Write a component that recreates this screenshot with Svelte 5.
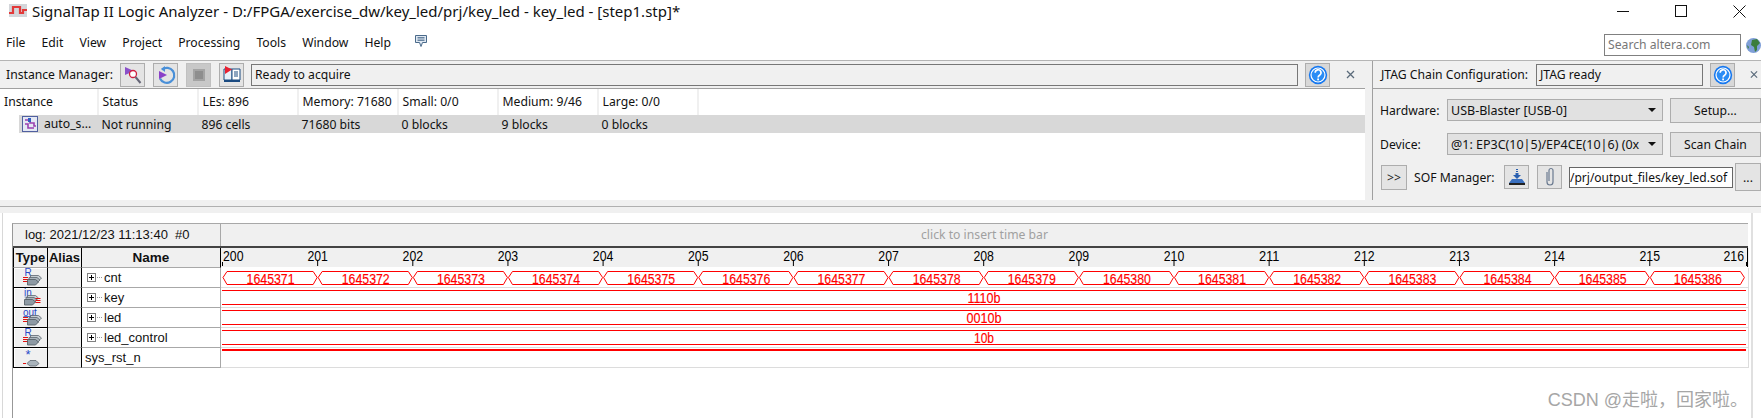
<script>
  const menus = ['File', 'Edit', 'View', 'Project', 'Processing', 'Tools', 'Window', 'Help'];
  const cols = [
    ['Instance', ''],
    ['Status', 'Not running'],
    ['LEs: 896', '896 cells'],
    ['Memory: 71680', '71680 bits'],
    ['Small: 0/0', '0 blocks'],
    ['Medium: 9/46', '9 blocks'],
    ['Large: 0/0', '0 blocks']
  ];
  const step = 95.15;
  const x0 = 1.5;
  const ticks = Array.from({ length: 17 }, (_, i) => ({ label: String(200 + i), x: x0 + step * i }));
  const segs = Array.from({ length: 16 }, (_, i) => {
    const a = x0 + step * i + 0.5;
    const b = x0 + step * (i + 1) - 0.5;
    return {
      label: String(1645371 + i),
      mid: (a + b) / 2 + 0.5,
      d: `M${a} 29.5L${a + 4} 23.5H${b - 4}L${b} 29.5L${b - 4} 36.5H${a + 4}Z`
    };
  });
  const buses = [
    { top: 42.5, label: '1110b', len: 33 },
    { top: 62.5, label: '0010b', len: 35 },
    { top: 82.5, label: '10b', len: 20 }
  ];
  const signals = [
    { kind: 'R', name: 'cnt', bus: true },
    { kind: 'in', name: 'key', bus: true },
    { kind: 'out', name: 'led', bus: true },
    { kind: 'R', name: 'led_control', bus: true },
    { kind: '*', name: 'sys_rst_n', bus: false }
  ];
</script>

{#snippet help()}
  <div class="btn help">
    <svg width="20" height="20" viewBox="0 0 20 20">
      <circle cx="10" cy="10" r="9.2" fill="#1678f0" />
      <circle cx="10" cy="10" r="7" fill="#2a8cf5" stroke="#fff" stroke-width="1.2" />
      <path d="M7.2 7.8a2.9 2.9 0 1 1 4.4 2.4c-1 .6-1.5 1-1.5 2.2" fill="none" stroke="#fff" stroke-width="1.6" />
      <rect x="9.2" y="13.5" width="1.8" height="1.8" fill="#fff" />
    </svg>
  </div>
{/snippet}

{#snippet closeX()}
  <svg class="x" width="9" height="9" viewBox="0 0 9 9"><path d="M1 1l7 7M8 1L1 8" stroke="#5a6a7a" stroke-width="1.3" /></svg>
{/snippet}

{#snippet stack(dx, dy)}
  <g transform="translate({dx} {dy})">
    <path d="M3 4h8l3 2.500-3 3H3z" fill="#c4ccd2" stroke="#5c666e" stroke-width=".8" />
    <path d="M1.500 6h8l3 2.500-3 3h-8z" fill="#aab4bc" stroke="#5c666e" stroke-width=".8" />
    <path d="M0 8h8l3 2.500-3 3H0z" fill="#8e9aa4" stroke="#4e5860" stroke-width=".8" />
  </g>
{/snippet}

{#snippet typeIcon(kind)}
  <svg width="26" height="19" viewBox="0 0 26 19">
    {#if kind === '*'}
      <text x="7.500" y="11" class="tk big">*</text>
      <path d="M5 15.500h3" stroke="#e01010" />
      <path d="M9 15.500l3-3h6l3 3-3 2.500h-6z" fill="#aab4bc" stroke="#5c666e" stroke-width=".8" />
    {:else if kind === 'in'}
      <text x="6" y="8" class="tk">in</text>
      <path d="M6.500 9h9" stroke="#8090c0" />
      {@render stack(6.500, 3.500)}
      <path d="M17.500 10.500h5M17.500 12.500h5M17.500 14.500h5" stroke="#e01010" />
    {:else}
      <text x={kind === 'out' ? 5 : 6.500} y="8" class="tk">{kind === 'out' ? 'out' : 'R'}</text>
      {#if kind === 'out'}<path d="M5.500 8.500h14" stroke="#5070c8" />{/if}
      <path d="M5 9.500h5M5 11.500h5M5 13.500h5" stroke="#e01010" />
      {@render stack(9.500, 3.500)}
    {/if}
  </svg>
{/snippet}

<div class="page">
  <header class="title">
    <svg class="logo" width="18" height="13" viewBox="0 0 18 13">
      <rect width="18" height="13" fill="#d4d6da" />
      <path d="M0 9h4V3h7v6h3V6h4" fill="none" stroke="#e23a3a" stroke-width="2.200" />
    </svg>
    <span class="title-text">SignalTap II Logic Analyzer - D:/FPGA/exercise_dw/key_led/prj/key_led - key_led - [step1.stp]*</span>
    <div class="win">
      <svg width="12" height="12" viewBox="0 0 12 12"><path d="M0 6.500h12" stroke="#111" /></svg>
      <svg width="12" height="12" viewBox="0 0 12 12"><rect x=".5" y=".5" width="11" height="11" fill="none" stroke="#111" /></svg>
      <svg width="13" height="13" viewBox="0 0 13 13"><path d="M.5.5l12 12M12.500.5l-12 12" stroke="#111" /></svg>
    </div>
  </header>

  <nav class="menu">
    {#each menus as m}<span>{m}</span>{/each}
    <svg class="bubble" width="14" height="14" viewBox="0 0 14 14">
      <path d="M1.500 1.500h11v7h-4l-1.500 4-1.500-4h-4z" fill="#dfe8f2" stroke="#4a6a8a" />
      <path d="M3.500 3.500h7M3.500 5h7M3.500 6.500h7" stroke="#4a6a8a" stroke-width=".8" />
    </svg>
    <div class="search-wrap">
      <div class="search">Search altera.com</div>
      <svg class="globe" width="15" height="15" viewBox="0 0 15 15">
        <circle cx="7.500" cy="7.500" r="7.500" fill="#7f9fd8" />
        <path d="M6 2l5-1 3 4-3 3v4l-2 2-1-5-3-2zM1 7l2 2-1 2z" fill="#3c7d3c" />
      </svg>
    </div>
  </nav>

  <section class="top">
    <div class="left">
      <div class="bar">
        <span class="bar-label im">Instance Manager:</span>
        <div class="tools">
          <div class="btn">
            <svg width="20" height="20" viewBox="0 0 20 20">
              <path d="M2 2l9 4-9 4z" fill="#8a50c8" />
              <circle cx="10" cy="9" r="3.500" fill="#fff" stroke="#d02040" stroke-width="1.300" />
              <path d="M12.500 12l5 6" stroke="#667" stroke-width="2" />
            </svg>
          </div>
          <div class="btn">
            <svg width="20" height="20" viewBox="0 0 20 20">
              <path d="M6 4.500a7.500 7.500 0 1 1-2 9" fill="none" stroke="#4a90d8" stroke-width="2.200" />
              <path d="M9 1v6l-4-3z" fill="#4a90d8" />
              <path d="M3 6l8 4-8 4z" fill="#8a40c8" />
            </svg>
          </div>
          <div class="btn off">
            <svg width="14" height="14" viewBox="0 0 14 14">
              <rect x="1" y="1" width="12" height="12" fill="#a4a4a4" />
              <rect x="3" y="3" width="8" height="8" fill="#8e8e8e" />
            </svg>
          </div>
          <div class="btn">
            <svg width="20" height="20" viewBox="0 0 20 20">
              <path d="M2 4h8v11H2z" fill="#e8f0f8" stroke="#1a4a80" />
              <path d="M10 4h8v11h-8z" fill="#fff" stroke="#1a4a80" />
              <path d="M12 7h4M12 9h4M12 11h4" stroke="#1a4a80" />
              <path d="M2 15h16v2H2z" fill="#1a4a80" />
              <path d="M3 1l7 3.500L3 9z" fill="#e82030" />
            </svg>
          </div>
        </div>
        <div class="status">Ready to acquire</div>
        {@render help()}
        {@render closeX()}
      </div>
      <div class="inst">
        {#each cols as c, i}
          <div class="col">
            <div class="th">{c[0]}</div>
            <div class="td" class:first={i === 0}>
              {#if i === 0}
                <svg class="chip" width="16" height="16" viewBox="0 0 16 16">
                  <rect x=".5" y=".5" width="15" height="15" fill="#e4e8f4" stroke="#5060a0" />
                  <path d="M3 4h5v3h4v3h2M3 8h3v4h6" fill="none" stroke="#9a3fb0" stroke-width="1.600" />
                  <path d="M6 2h3v4H6z" fill="#3060c0" />
                </svg>
                <span>auto_s...</span>
              {:else}{c[1]}{/if}
            </div>
          </div>
        {/each}
        <div class="col fill"><div class="th"></div><div class="td"></div></div>
      </div>
    </div>

    <div class="right">
      <div class="bar">
        <span class="bar-label jl">JTAG Chain Configuration:</span>
        <div class="status jtag">JTAG ready</div>
        {@render help()}
        {@render closeX()}
      </div>
      <div class="form">
        <div class="form-row">
          <span class="lab">Hardware:</span>
          <div class="select"><span>USB-Blaster [USB-0]</span><i></i></div>
          <div class="btn wide">Setup...</div>
        </div>
        <div class="form-row">
          <span class="lab">Device:</span>
          <div class="select"><span>@1: EP3C(10|5)/EP4CE(10|6) (0x</span><i></i></div>
          <div class="btn wide">Scan Chain</div>
        </div>
        <div class="form-row sof">
          <div class="btn more">&gt;&gt;</div>
          <span class="sof-lab">SOF Manager:</span>
          <div class="btn">
            <svg width="18" height="18" viewBox="0 0 18 18">
              <path d="M8 1h2v1H8zM8 3h2v1H8zM7.500 5h3v2H13l-4 4-4-4h2.500z" fill="#2a60b0" />
              <path d="M1 15l3-4h10l3 4z" fill="#3a70c0" /><path d="M1 15h16v2H1z" fill="#222" />
            </svg>
          </div>
          <div class="btn clip">
            <svg width="12" height="20" viewBox="0 0 12 20">
              <path d="M3 5v10a3 3 0 0 0 6 0V3.500a2 2 0 0 0-4 0V14" fill="none" stroke="#6a7a90" stroke-width="1.200" />
            </svg>
          </div>
          <div class="sof-input">/prj/output_files/key_led.sof</div>
          <div class="btn dots">...</div>
        </div>
      </div>
    </div>
  </section>

  <div class="split"></div>

  <section class="wavepanel">
    <div class="wavebox">
      <div class="loghead">
        <div class="logcell">log: 2021/12/23 11:13:40  #0</div>
        <div class="timebar">click to insert time bar</div>
      </div>
      <div class="grid">
        <div class="hd type">Type</div>
        <div class="hd alias">Alias</div>
        <div class="hd name">Name</div>
        <svg class="wave" width="1528" height="120" viewBox="0 0 1528 120">
          <rect x="0" y="0" width="1528" height="19" fill="#f0f0f0" />
          <path d="M1526.500 0v19" stroke="#000" />
          {#each [39.5, 59.5, 79.5, 99.5, 119.5] as y}
            <path d="M0 {y}H1528" stroke="#dcdcdc" />
          {/each}
          <path d="M1527.500 20v100" stroke="#dcdcdc" />
          {#each ticks as t, i}
            <path d="M{i === 16 ? 1525.5 : t.x} {i === 0 || i === 16 ? 14 : 12}V18" stroke="#000" />
            <text x={i === 0 ? 2 : i === 16 ? 1523 : t.x} y="13" text-anchor={i === 0 ? 'start' : i === 16 ? 'end' : 'middle'} textLength="20.5" lengthAdjust="spacingAndGlyphs" class="tick">{t.label}</text>
          {/each}
          {#each segs as s}
            <path d={s.d} fill="none" stroke="#f00" />
            <text x={s.mid} y="35.500" text-anchor="middle" textLength="48" lengthAdjust="spacingAndGlyphs" class="val">{s.label}</text>
          {/each}
          {#each buses as b}
            <path d="M1 {b.top}H1525M1 {b.top + 14}H1525" stroke="#f00" fill="none" />
            <text x="763" y={b.top + 12.5} text-anchor="middle" textLength={b.len} lengthAdjust="spacingAndGlyphs" class="val">{b.label}</text>
          {/each}
          <path d="M1 102H1525" stroke="#f00" stroke-width="2" />
        </svg>
        {#each signals as s}
          <div class="c-type">{@render typeIcon(s.kind)}</div>
          <div class="c-alias"></div>
          <div class="c-name" class:plain={!s.bus}>
            {#if s.bus}
              <span class="plus"></span><span class="dots-line"></span>
            {/if}
            <span>{s.name}</span>
          </div>
        {/each}
      </div>
    </div>
    <div class="mark">CSDN @走啦，回家啦。</div>
  </section>
</div>

<style>
  :global(body) { margin: 0; background: #fff; }
  .page {
    width: 1761px; height: 418px; overflow: hidden; background: #fff;
    display: flex; flex-direction: column; position: relative;
    font-family: "Noto Sans", sans-serif; font-size: 12.2px; color: #111;
  }
  .title { height: 30px; flex: none; display: flex; align-items: center; padding: 0 0 8px 9px; box-sizing: border-box; }
  .logo { margin-top: -1px; }
  .title-text { margin-left: 5px; font-size: 15px; color: #111; white-space: nowrap; }
  .win { margin-left: auto; display: flex; align-items: center; gap: 46px; padding-right: 15px; }
  .menu { height: 30px; flex: none; display: flex; align-items: center; padding: 0 0 6px 6px; gap: 16.1px; position: relative; box-sizing: border-box; }
  .bubble { margin: -3px 0 0 7px; }
  .search-wrap { margin-left: auto; display: flex; align-items: center; gap: 5px; padding-top: 6px; }
  .search { height: 20px; line-height: 20px; border: 1px solid #808080; padding-left: 3px; color: #777; width: 132px; }

  .top { height: 139px; flex: none; display: flex; border-top: 1px solid #b4b4b4; background: #f0f0f0; box-sizing: content-box; }
  .left { width: 1365px; flex: none; display: flex; flex-direction: column; background: #fff; }
  .right { width: 389px; margin-left: 7px; flex: none; border-left: 1px solid #a0a0a0; box-sizing: border-box; display: flex; flex-direction: column; }
  .bar { height: 28px; flex: none; background: #f0f0f0; border-bottom: 1px solid #a0a0a0; display: flex; align-items: center; box-sizing: border-box; padding-left: 6px; }
  .bar-label { white-space: nowrap; flex: none; }
  .im { width: 107px; }
  .jl { width: 149px; }
  .tools { display: flex; gap: 8px; margin-left: 7px; }
  .btn { width: 25px; height: 24px; box-sizing: border-box; border: 1px solid #adadad; background: #e4e4e4; display: flex; align-items: center; justify-content: center; flex: none; }
  .off { background: #c8c8c8; border-color: #c0c0c0; }
  .status { flex: 1; height: 22px; margin-left: 7px; border: 1px solid #777; box-sizing: border-box; line-height: 20px; padding-left: 3px; background: #f0f0f0; }
  .help { margin-left: 7px; background: #d8d8d8; }
  .x { margin-left: 16px; margin-right: 10px; }
  .right .x { margin-left: 15px; margin-right: 3px; }
  .right .bar { padding-left: 8px; }
  .jtag { flex: none; width: 167px; margin-left: 6px; }

  .inst { display: flex; flex: 1; }
  .col { width: 100px; flex: none; }
  .col:first-child { width: 98.5px; }
  .fill { flex: 1; }
  .th { height: 26px; line-height: 26px; padding-left: 4px; border-right: 2px solid #f0f0f0; box-sizing: border-box; white-space: nowrap; overflow: hidden; }
  .fill .th { border-right: none; }
  .td { height: 18px; line-height: 20px; background: #d8d8d8; padding-left: 3px; white-space: nowrap; }
  .first { margin-left: 19px; padding-left: 3px; display: flex; align-items: center; gap: 6px; }
  .chip { flex: none; }

  .form { display: flex; flex-direction: column; padding: 4px 0 0 7px; }
  .form-row { display: flex; align-items: center; height: 34px; }
  .lab { width: 67px; flex: none; }
  .select { width: 216px; height: 22px; box-sizing: border-box; border: 1px solid #adadad; background: #e1e1e1; display: flex; align-items: center; padding: 0 6px 0 3px; flex: none; font-size: 12.5px; }
  .select span { flex: 1; overflow: hidden; white-space: nowrap; }
  .select i { width: 0; height: 0; border-left: 4px solid transparent; border-right: 4px solid transparent; border-top: 4px solid #111; margin-left: 4px; flex: none; }
  .wide { width: 91px; height: 25px; margin-left: 7px; }
  .sof { height: 28px; margin-top: 2px; margin-left: 1px; }
  .more { width: 26px; height: 25px; color: #222; }
  .sof-lab { margin-left: 7px; width: 90px; flex: none; white-space: nowrap; }
  .clip { margin-left: 8px; }
  .sof-input { width: 164px; height: 21px; margin-left: 7px; border: 1px solid #666; box-sizing: border-box; background: #fff; line-height: 19px; white-space: nowrap; font-size: 12px; }
  .dots { width: 26px; height: 28px; margin-left: 2px; }

  .split { height: 13px; flex: none; background: linear-gradient(#f0f0f0 6px, #b0b0b0 6px, #b0b0b0 7px, #f0f0f0 7px); }

  .wavepanel { flex: 1; margin: 0 8px 0 2px; border-left: 1px solid #d8d8d8; border-right: 2px solid #e0e0e0; padding: 10px 3px 0 9px; min-height: 0; position: relative; background: #fff; }
  .wavebox { height: 100%; border-top: 1px solid #a8a8a8; border-left: 1px solid #989898; font-family: "Liberation Sans", Arial, sans-serif; font-size: 13px; color: #111; box-sizing: border-box; }
  .loghead { display: flex; background: #f0f0f0; border-bottom: 2px solid #444; height: 22px; }
  .logcell { border-right: 1px solid #a8a8a8; padding-left: 12px; line-height: 22px; white-space: pre; box-sizing: border-box; flex: none; width: 208px; }
  .timebar { flex: 1; text-align: center; line-height: 22px; color: #a0a0a0; font-family: "Noto Sans", sans-serif; font-size: 12.2px; }

  .grid { display: grid; grid-template-columns: 35px 34px 139px 1528px; grid-auto-rows: 20px; }
  .wave { grid-column: 4; grid-row: 1 / span 6; display: block; }
  .hd { background: #f0f0f0; font-weight: 700; text-align: center; line-height: 20px; box-sizing: border-box; border-bottom: 1px solid #a8a8a8; }
  .type { border-left: 1px solid #000; border-right: 1px solid #000; }
  .alias { border-right: 1px solid #000; }
  .name { font-size: 13.5px; border-right: 1px solid #000; }
  .c-type { grid-column: 1; background: #f0f0f0; border: solid #000; border-width: 0 1px 1px 1px; box-sizing: border-box; display: flex; align-items: center; justify-content: center; box-shadow: inset 1px 1px 0 #fff; }
  .c-alias { grid-column: 2; background: #f0f0f0; border: solid #000; border-width: 0 1px 1px 0; border-bottom-color: #a8a8a8; box-sizing: border-box; }
  .c-name { grid-column: 3; border-bottom: 1px solid #a8a8a8; border-right: 1px solid #a8a8a8; box-sizing: border-box; display: flex; align-items: center; padding-left: 5px; }
  .plain { padding-left: 3px; }
  .plus { width: 9px; height: 9px; border: 1px solid #808080; box-sizing: border-box; flex: none; background: linear-gradient(#000,#000) center/5px 1px no-repeat, linear-gradient(#000,#000) center/1px 5px no-repeat; }
  .dots-line { width: 5px; border-top: 1px dotted #999; margin: 0 2px 0 1px; flex: none; }
  .tick { font-size: 15px; fill: #000; font-family: "Liberation Sans", sans-serif; }
  .val { font-size: 14px; fill: #f00; stroke: #f00; stroke-width: .15px; font-family: "Liberation Sans", sans-serif; }
  .tk { font-size: 10px; fill: #2848c8; font-family: "Liberation Sans", sans-serif; }
  .big { font-size: 13px; }
  .mark { position: absolute; right: 3px; bottom: 7px; font-size: 18px; color: #a6a6a6; font-family: "Liberation Sans", "Noto Sans CJK SC", sans-serif; white-space: nowrap; }
</style>
